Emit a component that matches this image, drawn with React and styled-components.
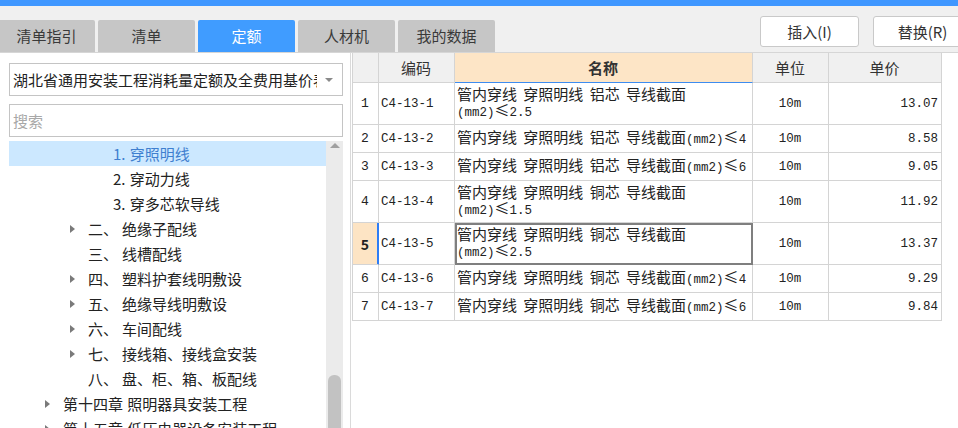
import React from 'react';
import styled, { createGlobalStyle } from 'styled-components';

const GlobalStyle = createGlobalStyle`
  html, body { margin: 0; padding: 0; background: #fff; overflow: hidden; }
  body { font-family: "Noto Sans CJK SC", "Noto Sans", sans-serif; color: #222; }
  * { box-sizing: border-box; }
`;

const CJK = '"Noto Sans CJK SC", "Noto Sans", sans-serif';
const MONO = '"Liberation Mono", "DejaVu Sans Mono", monospace';

const Page = styled.div`
  width: 958px;
  height: 428px;
  display: flex;
  flex-direction: column;
  overflow: hidden;
  background: #fff;
`;

const TopStripe = styled.div`
  flex: none;
  height: 6px;
  background: #3f97ff;
`;

const Toolbar = styled.div`
  flex: none;
  height: 47px;
  background: #f0f0f0;
  border-bottom: 1px solid #d6d6d6;
  display: flex;
  align-items: flex-end;
  justify-content: space-between;
`;

const Tabs = styled.div`
  display: flex;
  gap: 3px;
  margin-left: -2px;
`;

const Tab = styled.div`
  width: 97px;
  height: 32px;
  border-radius: 2px 2px 0 0;
  background: ${p => (p.$active ? '#409cff' : '#c6c6c6')};
  color: ${p => (p.$active ? '#ffffff' : '#3a3a3a')};
  font-family: ${CJK};
  font-size: 15px;
  line-height: 32px;
  text-align: center;
`;

const Actions = styled.div`
  align-self: flex-start;
  margin-top: 10px;
  margin-right: -14px;
  display: flex;
  gap: 14px;
`;

const ActionButton = styled.div`
  width: 99px;
  height: 31px;
  background: #fff;
  border: 1px solid #c9c9c9;
  border-radius: 3px;
  font-family: ${CJK};
  font-size: 15px;
  line-height: 29px;
  text-align: center;
  color: #333;
`;

const Main = styled.div`
  flex: 1;
  min-height: 0;
  display: flex;
`;

const LeftPanel = styled.div`
  flex: none;
  width: 351px;
  border-right: 1px solid #dadada;
  padding: 10px 7px 0 9px;
  display: flex;
  flex-direction: column;
  min-height: 0;
`;

const Combo = styled.div`
  flex: none;
  height: 33px;
  border: 1px solid #c4c4c4;
  display: flex;
  align-items: center;
  padding: 0 9px 0 3px;
  gap: 8px;
`;

const ComboText = styled.div`
  flex: 1;
  overflow: hidden;
  white-space: nowrap;
  font-family: ${CJK};
  font-size: 15px;
  line-height: 31px;
  color: #222;
`;

const ComboArrow = styled.div`
  flex: none;
  width: 0;
  height: 0;
  border-left: 4px solid transparent;
  border-right: 4px solid transparent;
  border-top: 4px solid #8a8a8a;
`;

const Search = styled.div`
  flex: none;
  height: 33px;
  margin-top: 8px;
  border: 1px solid #c4c4c4;
  padding-left: 3px;
  font-family: ${CJK};
  font-size: 15px;
  line-height: 31px;
  color: #a8a8a8;
`;

const Tree = styled.div`
  flex: 1;
  min-height: 0;
  margin-top: 4px;
  display: flex;
  overflow: hidden;
`;

const TreeRows = styled.div`
  flex: 1;
  min-width: 0;
  display: flex;
  flex-direction: column;
`;

const TreeRow = styled.div`
  flex: none;
  height: 25px;
  display: flex;
  align-items: center;
  padding-left: ${p => 36 + p.$level * 25}px;
  background: ${p => (p.$selected ? '#cce8ff' : 'transparent')};
  color: ${p => (p.$selected ? '#3f7fcf' : '#222')};
  font-family: ${CJK};
  font-size: 15px;
  line-height: 25px;
  white-space: nowrap;
  word-spacing: 1px;
`;

const Caret = styled.span`
  flex: none;
  width: 18px;
  display: flex;
  align-items: center;
  &::before {
    content: '';
    display: ${p => (p.$show ? 'block' : 'none')};
    width: 0;
    height: 0;
    border-top: 4px solid transparent;
    border-bottom: 4px solid transparent;
    border-left: 5px solid #7a7a7a;
  }
`;

const SectionNum = styled.span`
  display: inline-block;
  width: 34px;
`;

const Scrollbar = styled.div`
  flex: none;
  width: 17px;
  background: #ebebeb;
  display: flex;
  flex-direction: column;
  align-items: center;
`;

const ScrollUp = styled.div`
  flex: none;
  height: 17px;
  padding-top: 2px;
  &::before {
    content: '';
    display: block;
    width: 0;
    height: 0;
    border-left: 5px solid transparent;
    border-right: 5px solid transparent;
    border-bottom: 5px solid #a0a0a0;
  }
`;

const Thumb = styled.div`
  flex: none;
  width: 13px;
  height: 80px;
  margin-top: 217px;
  border-radius: 6px 6px 0 0;
  background: #c2c2c2;
`;

const RightPanel = styled.div`
  flex: 1;
  min-width: 0;
  padding-left: 1px;
  background: #fff;
  overflow: hidden;
`;

const Grid = styled.div`
  display: flex;
  flex-direction: column;
  width: 590px;
  border-left: 1px solid #d4d4d4;
`;

const GridRow = styled.div`
  display: grid;
  grid-template-columns: 26px 76px 298px 76px 113px;
  height: ${p => p.$h}px;
`;

const Cell = styled.div`
  display: flex;
  align-items: ${p => (p.$top ? 'flex-start' : 'center')};
  justify-content: ${p => (p.$align === 'left' ? 'flex-start' : p.$align === 'right' ? 'flex-end' : 'center')};
  padding: ${p => (p.$top ? '3px 2px 0 2px' : '0 3px 0 2px')};
  border-right: 1px solid #d4d4d4;
  border-bottom: 1px solid #d4d4d4;
  overflow: hidden;
  white-space: nowrap;
  color: #222;
  font-family: ${CJK};
  font-size: 15px;
  line-height: 16px;
  word-spacing: 3px;
`;

const HeadCell = styled(Cell)`
  background: ${p => (p.$accent ? '#fde5c6' : '#f0f0f0')};
  border-bottom-color: ${p => (p.$accent ? '#3d8cf0' : '#d4d4d4')};
  font-weight: ${p => (p.$accent ? 700 : 400)};
  color: #333;
`;

const NumCell = styled(Cell)`
  background: ${p => (p.$current ? '#fde4c4' : '#fff')};
  border-right-color: ${p => (p.$current ? '#2f7df5' : '#d4d4d4')};
  box-shadow: ${p => (p.$current ? 'inset -1px 0 0 #2f7df5' : 'none')};
  font-weight: ${p => (p.$current ? 700 : 400)};
  font-size: ${p => (p.$current ? '14px' : '13px')};
  font-family: ${p => (p.$current ? CJK : MONO)};
`;

const NameCell = styled(Cell)`
  flex-direction: column;
  align-items: flex-start;
  justify-content: ${p => (p.$top ? 'flex-start' : 'center')};
  outline: ${p => (p.$focus ? '2px solid #7f7f7f' : 'none')};
  outline-offset: -2px;
`;

const Mono = styled.span`
  font-family: ${MONO};
  font-size: 12.5px;
  word-spacing: 0;
`;

const Line = styled.span`
  display: block;
`;

const tabs = ['清单指引', '清单', '定额', '人材机', '我的数据'];

const tree = [
  { level: 2, text: '1. 穿照明线', selected: true },
  { level: 2, text: '2. 穿动力线' },
  { level: 2, text: '3. 穿多芯软导线' },
  { level: 1, num: '二、', text: '绝缘子配线', caret: true },
  { level: 1, num: '三、', text: '线槽配线' },
  { level: 1, num: '四、', text: '塑料护套线明敷设', caret: true },
  { level: 1, num: '五、', text: '绝缘导线明敷设', caret: true },
  { level: 1, num: '六、', text: '车间配线', caret: true },
  { level: 1, num: '七、', text: '接线箱、接线盒安装', caret: true },
  { level: 1, num: '八、', text: '盘、柜、箱、板配线' },
  { level: 0, text: '第十四章 照明器具安装工程', caret: true },
  { level: 0, text: '第十五章 低压电器设备安装工程', caret: true },
];

const AL = '管内穿线 穿照明线 铝芯 导线截面';
const CU = '管内穿线 穿照明线 铜芯 导线截面';

const rows = [
  { n: 1, code: 'C4-13-1', name: AL, spec: '2.5', wrap: true, price: '13.07', h: 42 },
  { n: 2, code: 'C4-13-2', name: AL, spec: '4', price: '8.58', h: 28 },
  { n: 3, code: 'C4-13-3', name: AL, spec: '6', price: '9.05', h: 28 },
  { n: 4, code: 'C4-13-4', name: CU, spec: '1.5', wrap: true, price: '11.92', h: 42 },
  { n: 5, code: 'C4-13-5', name: CU, spec: '2.5', wrap: true, price: '13.37', h: 42, current: true },
  { n: 6, code: 'C4-13-6', name: CU, spec: '4', price: '9.29', h: 28 },
  { n: 7, code: 'C4-13-7', name: CU, spec: '6', price: '9.84', h: 28 },
];

function Spec({ value }) {
  return (
    <>
      <Mono>(mm2)</Mono>≤<Mono>{value}</Mono>
    </>
  );
}

export default function App() {
  return (
    <Page>
      <GlobalStyle />
      <TopStripe />
      <Toolbar>
        <Tabs>
          {tabs.map(t => (
            <Tab key={t} $active={t === '定额'}>{t}</Tab>
          ))}
        </Tabs>
        <Actions>
          <ActionButton>插入(I)</ActionButton>
          <ActionButton>替换(R)</ActionButton>
        </Actions>
      </Toolbar>
      <Main>
        <LeftPanel>
          <Combo>
            <ComboText>湖北省通用安装工程消耗量定额及全费用基价表</ComboText>
            <ComboArrow />
          </Combo>
          <Search>搜索</Search>
          <Tree>
            <TreeRows>
              {tree.map((r, i) => (
                <TreeRow key={i} $level={r.level} $selected={r.selected}>
                  <Caret $show={r.caret} />
                  {r.num && <SectionNum>{r.num}</SectionNum>}
                  {r.text}
                </TreeRow>
              ))}
            </TreeRows>
            <Scrollbar>
              <ScrollUp />
              <Thumb />
            </Scrollbar>
          </Tree>
        </LeftPanel>
        <RightPanel>
          <Grid>
            <GridRow $h={30}>
              <HeadCell />
              <HeadCell>编码</HeadCell>
              <HeadCell $accent>名称</HeadCell>
              <HeadCell>单位</HeadCell>
              <HeadCell>单价</HeadCell>
            </GridRow>
            {rows.map(r => (
              <GridRow key={r.n} $h={r.h}>
                <NumCell $current={r.current}>{r.n}</NumCell>
                <Cell $align="left"><Mono>{r.code}</Mono></Cell>
                {r.wrap ? (
                  <NameCell $top $focus={r.current}>
                    <Line>{r.name}</Line>
                    <Line><Spec value={r.spec} /></Line>
                  </NameCell>
                ) : (
                  <NameCell>
                    <Line>{r.name}<Spec value={r.spec} /></Line>
                  </NameCell>
                )}
                <Cell><Mono>10m</Mono></Cell>
                <Cell $align="right"><Mono>{r.price}</Mono></Cell>
              </GridRow>
            ))}
          </Grid>
        </RightPanel>
      </Main>
    </Page>
  );
}
